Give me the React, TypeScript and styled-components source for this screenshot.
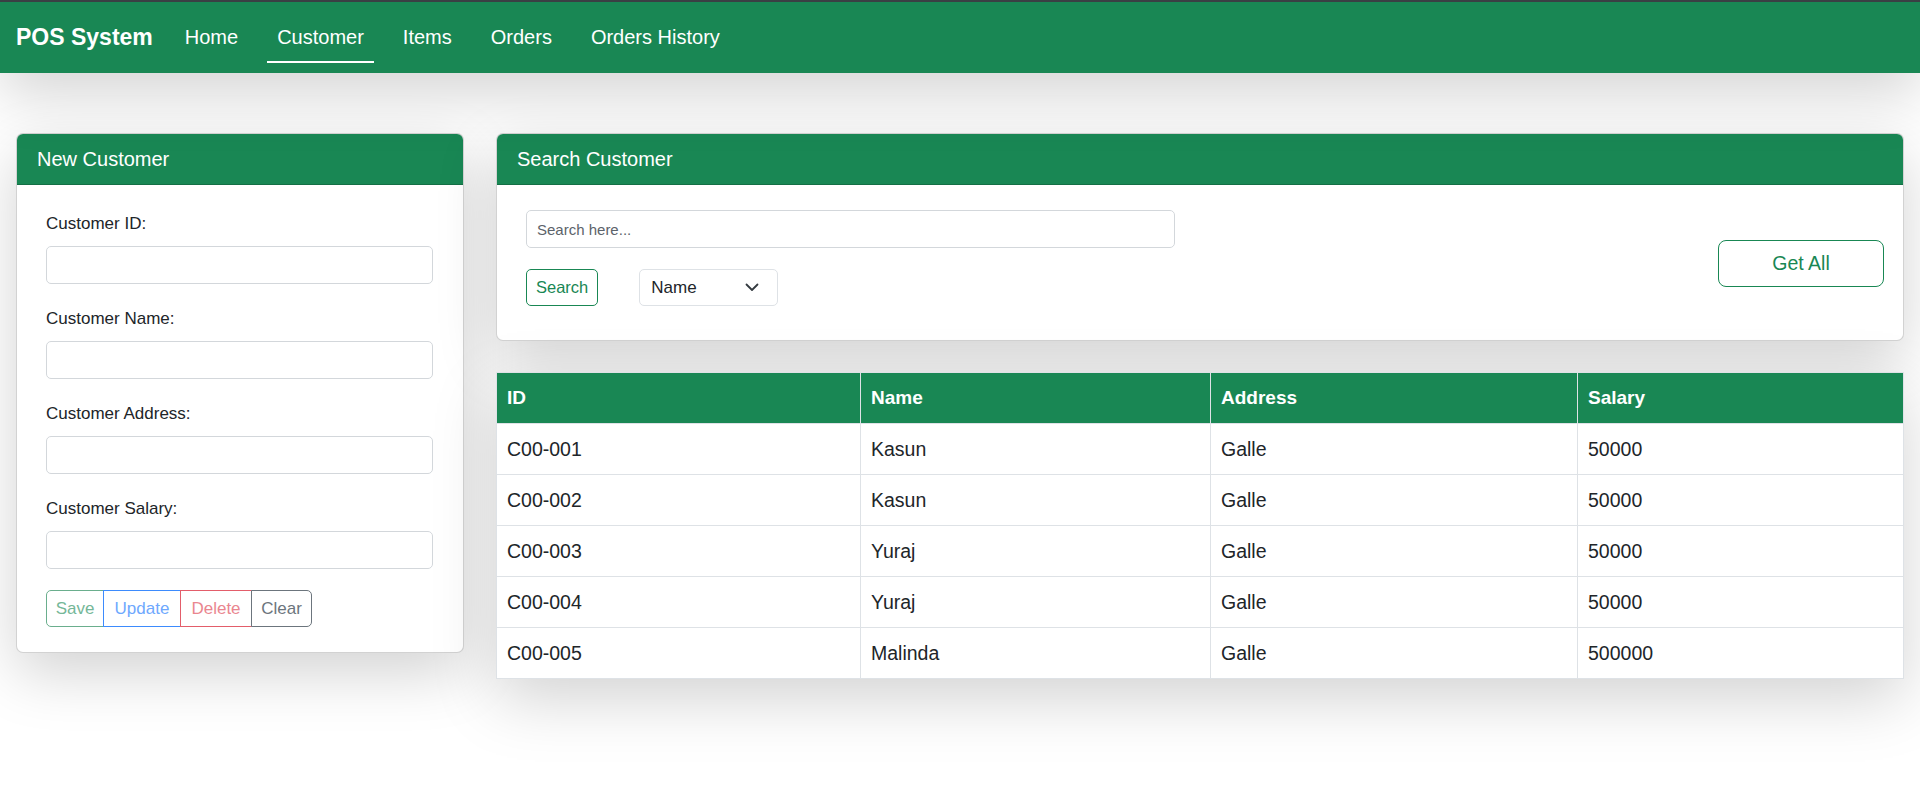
import * as React from "react";
import styled, { createGlobalStyle } from "styled-components";

const GREEN = "#198754";

const GlobalStyle = createGlobalStyle`
  * {
    box-sizing: border-box;
  }

  body {
    margin: 0;
    background: #fff;
    color: #212529;
    font-family: "Liberation Sans", Arial, sans-serif;
  }
`;

const Navbar = styled.nav`
  display: flex;
  align-items: stretch;
  height: 73px;
  padding: 0 16px;
  border-top: 2px solid #3a3f44;
  background-color: ${GREEN};
  box-shadow: 0 20px 60px rgba(0, 0, 0, 0.175);
  position: relative;
  z-index: 2;
`;

const Brand = styled.span`
  display: flex;
  align-items: center;
  margin-right: 22px;
  color: #fff;
  font-size: 23px;
  font-weight: bold;
`;

const NavLinks = styled.div`
  display: flex;
  gap: 19px;
`;

const NavLink = styled.a<{ $active?: boolean }>`
  position: relative;
  display: flex;
  align-items: center;
  padding: 0 10px;
  color: #fff;
  font-size: 20px;
  text-decoration: none;
  cursor: pointer;

  &::after {
    content: "";
    position: absolute;
    left: 0;
    right: 0;
    bottom: 10px;
    height: 2px;
    background: #fff;
    display: ${(p) => (p.$active ? "block" : "none")};
  }
`;

const Main = styled.main`
  display: grid;
  grid-template-columns: 448px 1fr;
  gap: 32px;
  align-items: start;
  padding: 60px 16px 128px;
`;

const RightColumn = styled.div`
  display: flex;
  flex-direction: column;
  gap: 31px;
`;

const Card = styled.section`
  background: #fff;
  border: 1px solid rgba(0, 0, 0, 0.175);
  border-radius: 7px;
  overflow: hidden;
  box-shadow: 0 20px 60px rgba(0, 0, 0, 0.175);
`;

const CardHeader = styled.header`
  padding: 10px 20px;
  background-color: ${GREEN};
  border-bottom: 1px solid rgba(0, 0, 0, 0.175);
  color: #fff;
  font-size: 20px;
  line-height: 30px;
`;

const FormBody = styled.div`
  display: flex;
  flex-direction: column;
  gap: 22px;
  padding: 26px 30px 25px 29px;
`;

const Field = styled.div`
  display: flex;
  flex-direction: column;
`;

const Label = styled.label`
  margin-bottom: 10px;
  font-size: 17px;
  line-height: 25px;
  color: #212529;
`;

const TextInput = styled.input`
  width: 100%;
  height: 38px;
  padding: 0 10px;
  border: 1px solid #d3d7db;
  border-radius: 5px;
  background: #fff;
  font-family: inherit;
  font-size: 15px;
  color: #212529;

  &::placeholder {
    color: #5c636a;
  }
`;

const ButtonGroup = styled.div`
  display: flex;
  margin-top: -1px;
`;

const tones = {
  save: { color: "#75b798", border: "#6aae8d", width: 58 },
  update: { color: "#6ea8fe", border: "#3d8bfd", width: 78 },
  delete: { color: "#ea868f", border: "#e35d6a", width: 72 },
  clear: { color: "#6c757d", border: "#6c757d", width: 61 },
};

const GroupButton = styled.button<{ $tone: keyof typeof tones }>`
  width: ${(p) => tones[p.$tone].width}px;
  height: 37px;
  padding: 0;
  margin-left: -1px;
  background: #fff;
  border: 1px solid ${(p) => tones[p.$tone].border};
  color: ${(p) => tones[p.$tone].color};
  font-family: inherit;
  font-size: 17px;
  border-radius: 0;

  &:first-child {
    margin-left: 0;
    border-radius: 5px 0 0 5px;
  }
  &:last-child {
    border-radius: 0 5px 5px 0;
  }
`;

const SearchBody = styled.div`
  display: flex;
  align-items: center;
  justify-content: space-between;
  padding: 25px 19px 24px 29px;
`;

const SearchControls = styled.div`
  display: flex;
  flex-direction: column;
  gap: 21px;
  width: 649px;
  padding-bottom: 10px;
`;

const SearchRow = styled.div`
  display: flex;
  align-items: center;
  gap: 41px;
`;

const OutlineButton = styled.button<{ $large?: boolean }>`
  height: ${(p) => (p.$large ? "47px" : "37px")};
  width: ${(p) => (p.$large ? "166px" : "auto")};
  padding: 0 ${(p) => (p.$large ? "0" : "9px")};
  background: #fff;
  border: 1px solid ${GREEN};
  border-radius: ${(p) => (p.$large ? "8px" : "5px")};
  color: ${GREEN};
  font-family: inherit;
  font-size: ${(p) => (p.$large ? "19.5px" : "16.5px")};
`;

const SelectWrap = styled.div`
  position: relative;
  width: 139px;
  height: 37px;
`;

const Select = styled.select`
  width: 100%;
  height: 100%;
  padding: 0 30px 0 11px;
  appearance: none;
  border: 1px solid #dee2e6;
  border-radius: 5px;
  background: #fff;
  color: #212529;
  font-family: inherit;
  font-size: 17px;
`;

const Chevron = styled.svg`
  position: absolute;
  right: 19px;
  top: 14px;
  width: 14px;
  height: 9px;
  pointer-events: none;
`;

const TableWrap = styled.div`
  box-shadow: 0 20px 60px rgba(0, 0, 0, 0.175);
`;

const Table = styled.table`
  width: 100%;
  border-collapse: collapse;
  table-layout: fixed;
  background: #fff;
  font-size: 19.5px;
  line-height: 30px;
`;

const HeadCell = styled.th`
  padding: 10px;
  background-color: ${GREEN};
  border: 1px solid #dee2e6;
  color: #fff;
  font-size: 19px;
  font-weight: bold;
  text-align: left;
`;

const Cell = styled.td`
  padding: 10px;
  border: 1px solid #dee2e6;
  color: #212529;
`;

const customers = [
  { id: "C00-001", name: "Kasun", address: "Galle", salary: "50000" },
  { id: "C00-002", name: "Kasun", address: "Galle", salary: "50000" },
  { id: "C00-003", name: "Yuraj", address: "Galle", salary: "50000" },
  { id: "C00-004", name: "Yuraj", address: "Galle", salary: "50000" },
  { id: "C00-005", name: "Malinda", address: "Galle", salary: "500000" },
];

const fields = [
  "Customer ID:",
  "Customer Name:",
  "Customer Address:",
  "Customer Salary:",
];

const App = () => {
  return (
    <>
      <GlobalStyle />
      <Navbar>
        <Brand>POS System</Brand>
        <NavLinks>
          <NavLink>Home</NavLink>
          <NavLink $active>Customer</NavLink>
          <NavLink>Items</NavLink>
          <NavLink>Orders</NavLink>
          <NavLink>Orders History</NavLink>
        </NavLinks>
      </Navbar>

      <Main>
        <Card>
          <CardHeader>New Customer</CardHeader>
          <FormBody>
            {fields.map((f) => (
              <Field key={f}>
                <Label>{f}</Label>
                <TextInput type="text" />
              </Field>
            ))}
            <ButtonGroup>
              <GroupButton $tone="save">Save</GroupButton>
              <GroupButton $tone="update">Update</GroupButton>
              <GroupButton $tone="delete">Delete</GroupButton>
              <GroupButton $tone="clear">Clear</GroupButton>
            </ButtonGroup>
          </FormBody>
        </Card>

        <RightColumn>
          <Card>
            <CardHeader>Search Customer</CardHeader>
            <SearchBody>
              <SearchControls>
                <TextInput type="text" placeholder="Search here..." />
                <SearchRow>
                  <OutlineButton>Search</OutlineButton>
                  <SelectWrap>
                    <Select defaultValue="name">
                      <option value="name">Name</option>
                      <option value="id">ID</option>
                      <option value="address">Address</option>
                    </Select>
                    <Chevron viewBox="0 0 14 9">
                      <path
                        d="M1.5 1.5 7 7l5.5-5.5"
                        fill="none"
                        stroke="#343a40"
                        strokeWidth="1.8"
                        strokeLinecap="round"
                        strokeLinejoin="round"
                      />
                    </Chevron>
                  </SelectWrap>
                </SearchRow>
              </SearchControls>
              <OutlineButton $large>Get All</OutlineButton>
            </SearchBody>
          </Card>

          <TableWrap>
            <Table>
              <colgroup>
                <col style={{ width: 364 }} />
                <col style={{ width: 350 }} />
                <col style={{ width: 367 }} />
                <col />
              </colgroup>
              <thead>
                <tr>
                  <HeadCell>ID</HeadCell>
                  <HeadCell>Name</HeadCell>
                  <HeadCell>Address</HeadCell>
                  <HeadCell>Salary</HeadCell>
                </tr>
              </thead>
              <tbody>
                {customers.map((c) => (
                  <tr key={c.id}>
                    <Cell>{c.id}</Cell>
                    <Cell>{c.name}</Cell>
                    <Cell>{c.address}</Cell>
                    <Cell>{c.salary}</Cell>
                  </tr>
                ))}
              </tbody>
            </Table>
          </TableWrap>
        </RightColumn>
      </Main>
    </>
  );
};

export default App;
